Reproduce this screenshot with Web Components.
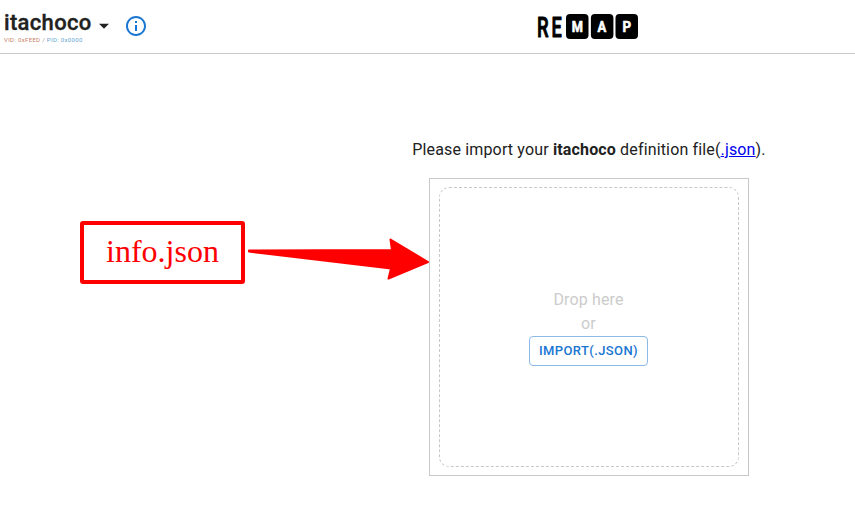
<!DOCTYPE html>
<html lang="en">
<head>
<meta charset="utf-8">
<title>Remap</title>
<style>
html,body{margin:0;height:100%;overflow:hidden;background:#fff}
body{font:16px/24px Roboto,sans-serif;color:#212121}
</style>
</head>
<body>
<remap-app></remap-app>
<script>
function define(name, html) {
  const template = document.createElement('template');
  template.innerHTML = html;
  customElements.define(name, class extends HTMLElement {
    constructor() {
      super();
      this.attachShadow({mode: 'open'}).append(template.content.cloneNode(true));
    }
  });
}

define('keyboard-title', `
<style>
:host{display:flex;align-items:flex-start;padding-left:4px}
.name{font-size:22px;line-height:26px;font-weight:500;height:26px;letter-spacing:.33px;-webkit-text-stroke:.35px #212121}
.ids{font-size:6px;line-height:8px;letter-spacing:.33px;white-space:nowrap;color:#999}
.ids span{color:#c98268}.ids b{font-weight:400;color:#65a6d0}
.block{width:90px;padding-top:10px}
.caret{margin:23px 0 0 5px}
.info{margin:14px 0 0 15px}
svg{display:block}
</style>
<div class="block"><div class="name"><slot></slot></div><div class="ids"><span>VID: 0xFEED</span> / <b>PID: 0x0000</b></div></div>
<svg class="caret" width="10" height="6" viewBox="0 0 10 6"><path d="M0 .8h10L5 5.8z" fill="#212121"/></svg>
<svg class="info" width="24" height="24" viewBox="0 0 24 24"><path fill="#1976d2" d="M11 7h2v2h-2zm0 4h2v6h-2zm1-9C6.48 2 2 6.48 2 12s4.48 10 10 10 10-4.48 10-10S17.52 2 12 2zm0 18c-4.41 0-8-3.59-8-8s3.59-8 8-8 8 3.59 8 8-3.59 8-8 8z"/></svg>
`);

define('remap-logo', `
<style>:host{display:block}svg{display:block}text{font-family:Roboto,sans-serif}</style>
<svg width="104" height="46" viewBox="-1 -10 104 46">
<g font-size="28" font-weight="500" stroke="#000" stroke-width="1" stroke-linejoin="round">
<text transform="translate(-.9 23.5) scale(.66 1)">R</text><text transform="translate(13.6 23.5) scale(.65 1)">E</text></g>
<rect x="28" y="1" width="22.5" height="25" rx="4"/><rect x="52.9" y="1" width="22.5" height="25" rx="4"/><rect x="77.5" y="1" width="22.5" height="25" rx="4"/>
<g font-size="14.5" font-weight="700" fill="#fff" stroke="#fff" stroke-width=".6" stroke-linejoin="round" text-anchor="middle">
<text transform="translate(39.3 18.8) scale(.88 1)">M</text><text transform="translate(64 18.8) scale(.9 1)">A</text><text transform="translate(88.8 18.8) scale(.92 1)">P</text></g>
</svg>`);

define('app-header', `
<style>
:host{display:grid;grid-template-columns:537px auto;justify-content:start;height:53px;border-bottom:1px solid #c8c8c8}
remap-logo{margin-top:3px}
</style>
<keyboard-title>itachoco</keyboard-title><remap-logo></remap-logo>`);

define('import-button', `
<style>
:host{display:block}
button{display:block;box-sizing:border-box;width:119px;height:30px;padding:0;border:1px solid #8cbae8;border-radius:4px;background:#fff;color:#1976d2;font:500 13px/22px Roboto,sans-serif;letter-spacing:.4px;text-transform:uppercase;white-space:nowrap}
</style><button><slot></slot></button>`);

define('drop-zone', `
<style>
:host{display:block;box-sizing:border-box;width:320px;height:298px;padding:8px 9px;border:1px solid #c8c8c8}
.area{box-sizing:border-box;height:280px;padding-right:1px;border:1px dashed #c8c8c8;border-radius:10px;display:flex;flex-direction:column;align-items:center;justify-content:center;color:#ccc}
</style>
<div class="area"><div>Drop here</div><div>or</div><import-button>import(.json)</import-button></div>`);

define('import-panel', `
<style>
:host{display:flex;flex-direction:column;align-items:center;padding:84px 0 0 323px;letter-spacing:.15px}
p{margin:0 0 16px;white-space:nowrap;letter-spacing:.15px}
b{font-weight:700}
a{color:#00e}
</style>
<p>Please import your <b>itachoco</b> definition file(<a href="#">.json</a>).</p>
<drop-zone></drop-zone>`);

define('file-callout', `
<style>
:host{position:absolute;left:80px;top:221px;width:350px;height:64px;color:#f00}
.label{box-sizing:border-box;width:165px;height:63px;border:4px solid #f00;border-radius:3px;text-align:center;font:32px/52px "Liberation Serif",serif}
svg{position:absolute;left:160px;top:12px}
</style>
<div class="label"><slot></slot></div>
<svg width="192" height="50" viewBox="0 0 192 50"><path d="M9 17.4L152 17 150.5 6.5 188 29 148.5 45.5 151 35.5 9 18.6z" fill="#f00" stroke="#f00" stroke-width="2" stroke-linejoin="round"/></svg>`);

define('remap-app', `
<style>:host{display:block;position:relative;width:855px;height:530px}</style>
<app-header></app-header><import-panel></import-panel><file-callout>info.json</file-callout>`);
</script>
</body>
</html>
